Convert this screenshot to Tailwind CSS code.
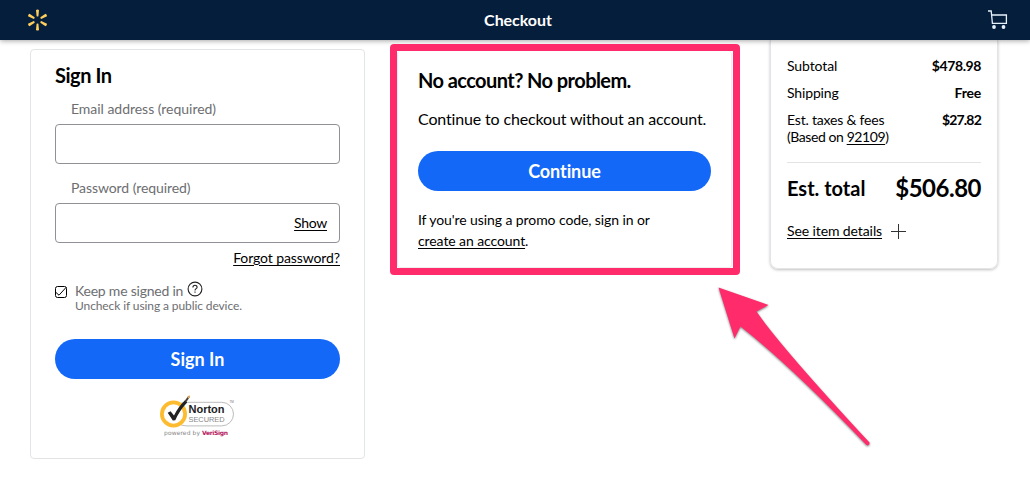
<!DOCTYPE html>
<html lang="en">
<head>
    <meta charset="utf-8">
    <title>Checkout</title>
    <script src="https://cdn.jsdelivr.net/npm/@tailwindcss/browser@4"></script>
</head>
<body class="h-[488px] overflow-hidden bg-white font-['Lato',sans-serif] text-sm text-black [font-variant-ligatures:none]">
    <header class="relative z-10 flex h-10 items-center justify-between bg-[#041e3c] pr-[22px] pl-[27px] shadow-[0_1px_5px_rgba(0,0,0,0.35)]">
        <svg class="h-[22px] w-[21px]" viewBox="0 0 21 22" fill="#ffcf5c">
            <g id="spark">
                <path d="M9 .9q1.500-1 3 0l-.6 6.300q-.9.700-1.800 0z"/>
                <path d="M9 21.100q1.500 1 3 0l-.6-6.300q-.9-.7-1.800 0z"/>
            </g>
            <use href="#spark" transform="rotate(60 10.5 11)"/>
            <use href="#spark" transform="rotate(120 10.5 11)"/>
        </svg>
        <h1 class="-mt-px text-base font-bold tracking-[-0.05px] text-white">Checkout</h1>
        <svg class="h-5 w-5" viewBox="0 0 20 20" fill="none" stroke="#e6f1fc" stroke-width="1.3">
            <path d="M0 1h3.2l1.2 12.4h14V5H3.6"/>
            <circle cx="6" cy="17" r="1.9" fill="#e6f1fc" stroke="none"/>
            <circle cx="15.5" cy="17" r="1.9" fill="#e6f1fc" stroke="none"/>
        </svg>
    </header>

    <main class="flex items-start pl-[30px]">
        <!-- Sign in form -->
        <form class="mt-[9px] h-[410px] w-[335px] rounded-sm border border-[#e3e4e5] px-6 pt-3">
            <h2 class="text-[20px] leading-[26px] font-bold tracking-[-0.45px]">Sign In</h2>
            <label for="email" class="mt-[11px] block pl-4 leading-5 tracking-[-0.03px] text-[#6d6e71]">Email address (required)</label>
            <input id="email" type="email" class="mt-[5px] block h-10 w-full rounded-sm border border-[#909196] px-4">
            <label for="password" class="mt-[14px] block pl-4 leading-5 tracking-[-0.08px] text-[#6d6e71]">Password (required)</label>
            <div class="mt-[5px] flex h-10 items-center rounded-sm border border-[#909196] pr-3">
                <input id="password" type="password" class="h-full w-0 grow px-4">
                <button type="button" class="tracking-[-0.3px] underline underline-offset-2">Show</button>
            </div>
            <div class="mt-[5px] text-right leading-5"><a href="#" class="tracking-[-0.1px] underline underline-offset-2">Forgot password?</a></div>
            <div class="mt-[13px] flex text-[#6d6e71]">
                <svg class="mt-[5px] h-3 w-3" viewBox="0 0 12 12" fill="none" stroke="#000">
                    <rect x=".5" y=".5" width="11" height="11" rx="2"/>
                    <path d="M1 6.5 4 9.2 11 1.5"/>
                </svg>
                <div class="ml-2">
                    <div class="flex h-[18px] gap-1 leading-5">
                        <span class="tracking-[-0.22px]">Keep me signed in</span>
                        <svg class="h-4 w-4" viewBox="0 0 16 16" fill="none" stroke="#222" stroke-width="1.1">
                            <circle cx="8" cy="8" r="6.9"/>
                            <path d="M5.9 6.4c0-2.8 4.2-2.7 4.2-.2 0 1.5-2.1 1.4-2.1 3.2M8 10.6v1.2"/>
                        </svg>
                    </div>
                    <div class="text-xs leading-[14px] tracking-[-0.1px]">Uncheck if using a public device.</div>
                </div>
            </div>
            <button type="submit" class="mt-[26px] flex h-10 w-full items-center justify-center rounded-full bg-[#1368f7] text-lg font-bold text-white">Sign In</button>
            <svg class="mt-4 ml-[105px] h-11 w-[76px]" viewBox="0 0 76 44" fill="none">
                <rect x="14" y="7.3" width="59.5" height="23.6" rx="11.8" stroke="#bcbcbc"/>
                <circle cx="13.5" cy="19" r="11.6" fill="#fff" stroke="#fdbb30" stroke-width="3.8"/>
                <path d="m7.7 17.8 2.9-1.5 3.4 4.100Q18 12 25 5.200l2.200 2.300Q19.500 15.500 15.300 25.300l-2.500.2z" fill="#222"/>
                <path d="M25.600 6.300 29 1.500" stroke="#4a4030" stroke-width="2"/>
                <path d="m28 3 1.600-2.400" stroke="#e0ac55" stroke-width="1.5"/>
                <text x="28.5" y="18" textLength="36" font-family="Liberation Sans" font-weight="bold" font-size="11" fill="#222">Norton</text>
                <text x="28.5" y="27.4" textLength="36" font-family="Liberation Sans" font-size="7.4" fill="#888">SECURED</text>
                <text x="69.5" y="8" font-family="Liberation Sans" font-size="3" fill="#777">TM</text>
                <text x="4" y="40" textLength="36" font-family="DejaVu Sans" font-size="6" fill="#888">powered by</text>
                <text x="42" y="40" textLength="26" font-family="DejaVu Sans" font-weight="bold" font-size="6" fill="#b5175c">VeriSign</text>
            </svg>
        </form>

        <!-- Guest checkout -->
        <section class="relative z-20 mt-1 ml-[25px] h-[231px] w-[350px] rounded-[4px] border-7 border-[#ff2b6b]">
            <div class="h-[217px] w-[335px] rounded-sm border border-t-0 border-[#eeeeee] pr-[20px] pl-5">
                <h2 class="pt-4 text-[20px] leading-[26px] font-bold tracking-[-0.57px]">No account? No problem.</h2>
                <p class="mt-[14px] text-base leading-6 tracking-[-0.15px] whitespace-nowrap">Continue to checkout without an account.</p>
                <button type="button" class="mt-5 flex h-10 w-full items-center justify-center rounded-full bg-[#1368f7] text-lg font-bold tracking-[-0.1px] text-white">Continue</button>
                <p class="mt-[18px] leading-[21px] tracking-[-0.09px] whitespace-nowrap">If you're using a promo code, sign in or<br><a href="#" class="underline underline-offset-2">create an account</a>.</p>
            </div>
        </section>

        <!-- Order summary -->
        <aside class="ml-[30px] h-[229px] w-[228px] rounded-b-lg border border-t-0 border-[#e3e4e5] px-4 pt-4 shadow-[0_1px_3px_rgba(0,0,0,0.25)]">
            <div class="flex justify-between leading-5"><span class="tracking-[-0.1px]">Subtotal</span><b class="tracking-[-0.4px]">$478.98</b></div>
            <div class="mt-[7px] flex justify-between leading-5"><span class="tracking-[-0.15px]">Shipping</span><b class="tracking-[-0.2px]">Free</b></div>
            <div class="mt-2 flex justify-between leading-[17px]">
                <div class="tracking-[-0.2px]">Est. taxes &amp; fees<br><span class="tracking-[-0.42px]">(Based on <a href="#" class="underline underline-offset-2">92109</a>)</span></div>
                <b class="tracking-[-0.8px]">$27.82</b>
            </div>
            <div class="mt-[17px] flex items-center justify-between border-t border-[#e3e4e5] pt-[9px] leading-[30px] font-bold">
                <span class="text-[20px]">Est. total</span>
                <span class="text-2xl tracking-[-0.5px]">$506.80</span>
            </div>
            <div class="mt-[17px] flex items-center gap-[9px] leading-5">
                <a href="#" class="tracking-[-0.1px] underline underline-offset-2">See item details</a>
                <svg class="h-[15px] w-[15px]" viewBox="0 0 15 15" stroke="#333"><path d="M7.5 0v15M0 7.5h15"/></svg>
            </div>
        </aside>
    </main>

    <!-- Callout arrow -->
    <svg class="pointer-events-none absolute top-[280px] left-[710px] h-[172px] w-[170px] drop-shadow-[0_1px_1px_rgba(0,0,0,0.5)]" viewBox="710 280 170 172" fill="#ff2b6b">
        <path d="M718.5 287.500 768.500 305 756.500 311.500Q781 347 869.500 442.500Q870 446 866.500 445Q790 365 740.500 326.500L734.500 338.500z"/>
    </svg>
</body>
</html>
